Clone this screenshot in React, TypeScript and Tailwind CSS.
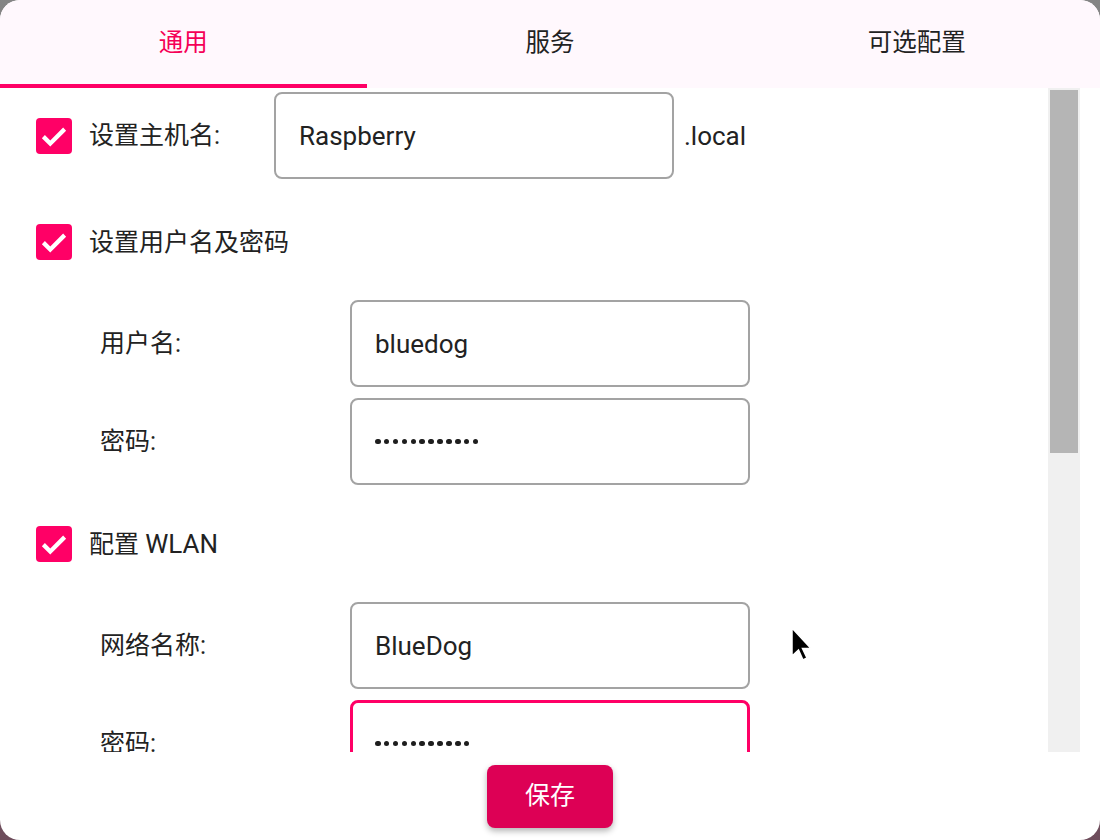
import React from "react";

const font = { fontFamily: "Roboto, 'Noto Sans CJK SC', sans-serif" };

const Check: React.FC = () => (
  <div className="w-[36px] h-[36px] rounded-[4px] bg-[#ff0066] flex items-center justify-center shrink-0">
    <svg width="30" height="30" viewBox="0 0 24 24">
      <path d="M3.5 12.5l5.5 5.5L20.5 6.5" fill="none" stroke="white" strokeWidth="3.4" />
    </svg>
  </div>
);

const Dots: React.FC<{ n: number }> = ({ n }) => (
  <div className="flex gap-[3.4px]">
    {Array.from({ length: n }).map((_, i) => (
      <div key={i} className="w-[5.5px] h-[5.5px] rounded-full bg-[#1e1e1e]" />
    ))}
  </div>
);

type FieldProps = {
  label: string;
  value?: string;
  dots?: number;
  focused?: boolean;
};

const Field: React.FC<FieldProps> = (props: FieldProps) => {
  return (
    <div className="flex items-center h-[87px]">
      <div className="w-[350px] pl-[100px] text-[25px] leading-none text-[#222]">{props.label}</div>
      <div
        className={
          props.focused
            ? "w-[400px] h-[87px] rounded-[8px] border-[3px] border-[#ff0066] flex items-center pl-[22px] shrink-0"
            : "w-[400px] h-[87px] rounded-[8px] border-2 border-[#a3a3a3] flex items-center pl-[23px] shrink-0"
        }
      >
        {props.dots ? (
          <Dots n={props.dots} />
        ) : (
          <span className="text-[26px] leading-none text-[#222]">{props.value}</span>
        )}
      </div>
    </div>
  );
};

const App: React.FC = () => {
  const tabs = ["通用", "服务", "可选配置"];
  return (
    <div
      className="w-[1100px] h-[840px] bg-gradient-to-b from-[#858585] to-[#6e4d5c] overflow-hidden"
      style={font}
    >
      <div className="w-full h-full rounded-[20px] bg-white overflow-hidden flex flex-col relative">
        {/* tabs */}
        <div className="h-[88px] bg-[#fff8fd] flex shrink-0">
          {tabs.map((t, i) => (
            <div key={t} className="flex-1 relative flex items-center justify-center">
              <span
                className={
                  i === 0
                    ? "text-[24.5px] text-[#f50057] -mt-[1px]"
                    : "text-[24.5px] text-[#222] -mt-[1px]"
                }
              >
                {t}
              </span>
              {i === 0 && <div className="absolute left-0 right-0 bottom-0 h-[4px] bg-[#ff0066]" />}
            </div>
          ))}
        </div>

        {/* content */}
        <div className="flex-1 flex min-h-0">
          <div className="flex-1 overflow-hidden pt-[4px]">
            <div className="flex items-center h-[87px]">
              <div className="w-[274px] flex items-center pl-[36px] gap-[17px]">
                <Check />
                <span className="text-[25px] leading-none text-[#222]">设置主机名:</span>
              </div>
              <div className="w-[400px] h-[87px] rounded-[8px] border-2 border-[#a3a3a3] flex items-center pl-[23px]">
                <span className="text-[26px] leading-none text-[#222]">Raspberry</span>
              </div>
              <span className="text-[26px] leading-none text-[#222] ml-[10px]">.local</span>
            </div>

            <div className="flex items-center h-[36px] pl-[36px] gap-[17px] mt-[45px]">
              <Check />
              <span className="text-[25px] leading-none text-[#222]">设置用户名及密码</span>
            </div>

            <div className="mt-[40px] flex flex-col gap-[11px]">
              <Field label="用户名:" value="bluedog" />
              <Field label="密码:" dots={12} />
            </div>

            <div className="flex items-center h-[36px] pl-[36px] gap-[17px] mt-[41px]">
              <Check />
              <span className="text-[25px] leading-none text-[#222]">
                配置 <span className="text-[26px]">WLAN</span>
              </span>
            </div>

            <div className="mt-[40px] flex flex-col gap-[11px]">
              <Field label="网络名称:" value="BlueDog" />
              <Field label="密码:" dots={11} focused />
            </div>
          </div>

          {/* scrollbar */}
          <div className="w-[32px] bg-[#f0f0f0] px-[2px] pt-[2px] mr-[20px]">
            <div className="h-[363px] bg-[#b5b5b5]" />
          </div>
        </div>

        {/* footer */}
        <div className="h-[88px] flex items-center justify-center shrink-0">
          <button className="w-[126px] h-[63px] rounded-[8px] bg-[#dd0055] text-white text-[25px] shadow-[0_3px_6px_rgba(0,0,0,0.3)]">
            保存
          </button>
        </div>

        {/* mouse pointer */}
        <svg className="absolute left-[789px] top-[626px]" width="26" height="40" viewBox="0 0 26 40">
          <path
            d="M3 2 L3 30 L9.5 24 L14 34 L18 32 L13.5 22.5 L22 22.5 Z"
            fill="black"
            stroke="white"
            strokeWidth="1.5"
          />
        </svg>
      </div>
    </div>
  );
};

export default App;
